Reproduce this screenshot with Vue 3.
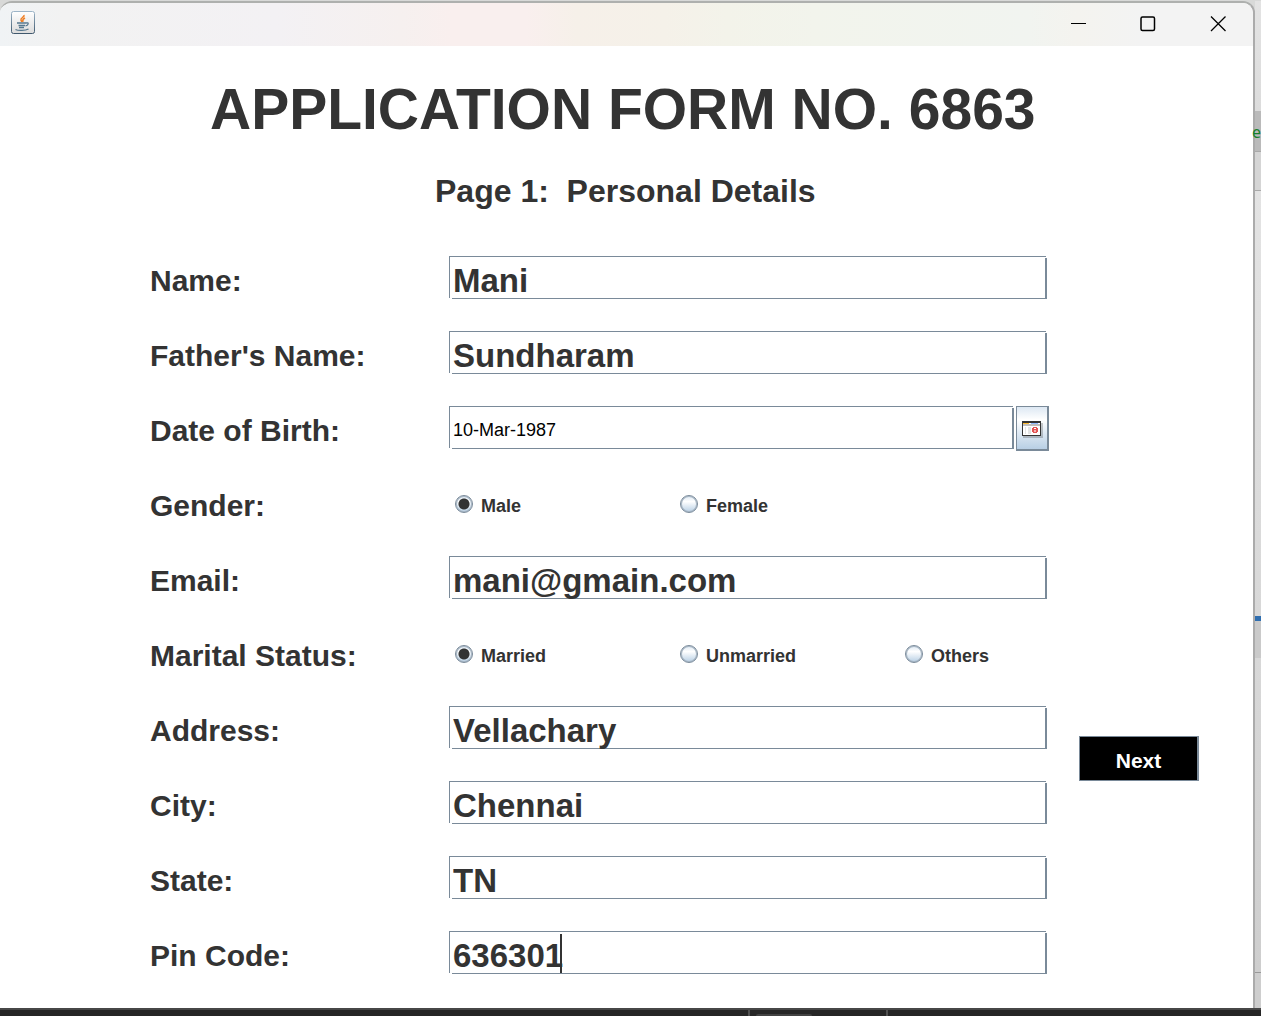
<script setup>
import { reactive } from 'vue'

const form = reactive({
  name: 'Mani',
  father: 'Sundharam',
  dob: '10-Mar-1987',
  gender: 'Male',
  email: 'mani@gmain.com',
  marital: 'Married',
  address: 'Vellachary',
  city: 'Chennai',
  state: 'TN',
  pin: '636301'
})

const rows = [
  { key: 'name', label: 'Name:', type: 'text' },
  { key: 'father', label: "Father's Name:", type: 'text' },
  { key: 'dob', label: 'Date of Birth:', type: 'date' },
  { key: 'gender', label: 'Gender:', type: 'radio', options: ['Male', 'Female'] },
  { key: 'email', label: 'Email:', type: 'text' },
  { key: 'marital', label: 'Marital Status:', type: 'radio', options: ['Married', 'Unmarried', 'Others'] },
  { key: 'address', label: 'Address:', type: 'text', next: true },
  { key: 'city', label: 'City:', type: 'text' },
  { key: 'state', label: 'State:', type: 'text' },
  { key: 'pin', label: 'Pin Code:', type: 'text', caret: true }
]
</script>

<template>
  <div class="desktop">
    <div class="workspace">
      <section class="window">
        <header class="titlebar">
          <svg class="app-icon" width="24" height="24" viewBox="0 0 24 24" aria-hidden="true">
            <defs>
              <linearGradient id="tile" x1="0" y1="0" x2="0" y2="1">
                <stop offset="0" stop-color="#ffffff" />
                <stop offset="1" stop-color="#dcdcdc" />
              </linearGradient>
              <linearGradient id="edge" x1="0" y1="0" x2="0" y2="1">
                <stop offset="0" stop-color="#9db5c8" />
                <stop offset="1" stop-color="#3f586d" />
              </linearGradient>
            </defs>
            <rect x="0.5" y="0.5" width="23" height="22" rx="2" fill="url(#tile)" stroke="url(#edge)" />
            <path d="M13 4c1 2-4 3-3 5 0 1 1 1.500 1 2M14 7c-2 1-3 2-1.500 3.500" fill="none" stroke="#ef7d22" stroke-width="1.500" />
            <path d="M6 12h9.500M15 12c3-1 3 2-.5 3M7.500 14.500h6.500M8 16.500h5M4.500 18.500c3 1.500 10 1 13-.5" fill="none" stroke="#56788f" stroke-width="1.300" />
          </svg>
          <div class="controls">
            <button type="button" aria-label="Minimize">
              <svg width="16" height="16" viewBox="0 0 16 16"><path d="M1 7.500h15" stroke="#000" /></svg>
            </button>
            <button type="button" aria-label="Maximize">
              <svg width="16" height="16" viewBox="0 0 16 16"><rect x="1" y="1" width="13.500" height="13.500" rx="1.500" fill="none" stroke="#000" stroke-width="1.500" /></svg>
            </button>
            <button type="button" aria-label="Close">
              <svg width="16" height="16" viewBox="0 0 16 16"><path d="M1 .5l14.500 14.500M15.500 .5L1 15" stroke="#000" stroke-width="1.300" /></svg>
            </button>
          </div>
        </header>

        <main>
          <h1>APPLICATION FORM NO. 6863</h1>
          <h2>Page 1:&nbsp; Personal Details</h2>

          <form @submit.prevent>
            <template v-for="row in rows" :key="row.key">
              <component :is="row.type === 'radio' ? 'span' : 'label'" :id="row.key + '-label'" class="label" :for="row.type === 'radio' ? null : row.key">{{ row.label }}</component>

              <div v-if="row.type === 'text'" class="field">
                <input :id="row.key" v-model="form[row.key]" class="box" type="text" />
                <span v-if="row.caret" class="caret"></span>
              </div>

              <div v-else-if="row.type === 'date'" class="field date">
                <input :id="row.key" v-model="form[row.key]" class="box" type="text" />
                <button class="calendar" type="button" aria-label="Choose date">
                  <svg width="21" height="17" viewBox="0 0 21 17" shape-rendering="crispEdges">
                    <path d="M1 2h20v15H1z" fill="#000" opacity=".2" />
                    <path d="M0 0h19v15H0z" fill="#333" />
                    <path d="M1 2h17v12H1z" fill="#fff" />
                    <path d="M1 2h6v1H1z" fill="#fdb82e" />
                    <path d="M9 2h7v1H9z" fill="#8fb9ff" />
                    <path d="M1 3h17v2H1z" fill="#bdbdbd" />
                    <path d="M3 6h1v7H3zM6 6h3v7H6z" fill="#e4e4e4" />
                    <path d="M11 6h4v1h-4zM10 7h2v4h-2zM14 7h2v4h-2zM11 11h4v1h-4zM12 8h2v1h-2z" fill="#e25555" />
                    <path d="M12 9h2v2h-2z" fill="#f6b0b0" />
                  </svg>
                </button>
              </div>

              <div v-else class="options" role="radiogroup" :aria-labelledby="row.key + '-label'">
                <label v-for="option in row.options" :key="option">
                  <input v-model="form[row.key]" type="radio" :name="row.key" :value="option" />
                  <span>{{ option }}</span>
                </label>
              </div>

              <div class="action">
                <button v-if="row.next" class="next" type="submit">Next</button>
              </div>
            </template>
          </form>
        </main>
      </section>

      <aside class="behind"><span class="code">e</span></aside>
    </div>
    <footer class="taskbar"><i class="tab"></i></footer>
  </div>
</template>

<style>
body {
  margin: 0;
}
</style>

<style scoped>
.desktop {
  min-height: 100vh;
  display: flex;
  flex-direction: column;
  background: #d8d9d8;
  font-family: "Liberation Sans", Arial, sans-serif;
  color: #333;
}

.workspace {
  flex: 1;
  display: grid;
  grid-template-columns: minmax(0, 1fr) 6px;
  padding-top: 1px;
}

.window {
  border-top: 2px solid #aeb0ae;
  border-right: 2px solid #ababab;
  border-top-right-radius: 12px;
  border-top-left-radius: 12px;
  background: #fff;
  overflow: hidden;
}

.titlebar {
  height: 43px;
  display: flex;
  justify-content: space-between;
  background: linear-gradient(90deg, #f0f3f5 0, #f2f2f2 5%, #f3f1f4 22%, #f6f0ef 32%, #f9efee 36%, #f9efee 42%, #f6f0e9 46%, #f5f1e9 53%, #f3f3ea 58%, #f2f4ec 65%, #f1f4f0 82%, #f4f3ef 86%, #f3f3f3 91%);
}

.app-icon {
  margin: 8px 0 0 11px;
}

.controls {
  display: flex;
}

.controls button {
  width: 70px;
  height: 43px;
  padding: 0 0 2px;
  border: 0;
  background: none;
  display: flex;
  align-items: center;
  justify-content: center;
}

main {
  padding: 31px 54px 0 150px;
}

h1 {
  margin: 0;
  padding-left: 60px;
  font-size: 57px;
  line-height: 64px;
  white-space: nowrap;
}

h2 {
  margin: 31px 0 0;
  padding-left: 285px;
  font-size: 32px;
  line-height: 38px;
  white-space: nowrap;
}

form {
  margin-top: 46px;
  display: grid;
  grid-template-columns: 299px minmax(0, 1fr) 120px;
  grid-auto-rows: 75px;
}

.label {
  font-size: 30px;
  line-height: 50px;
  font-weight: 700;
}

.field {
  position: relative;
  display: flex;
  align-items: flex-start;
  margin-right: 32px;
}

.box {
  box-sizing: border-box;
  flex: 1;
  min-width: 0;
  height: 43px;
  margin: 0;
  padding: 7px 4px 0;
  border: 0;
  border-radius: 0;
  outline: 0;
  background:
    linear-gradient(#7a8a99, #7a8a99) 0 0 / 1px 42px no-repeat,
    linear-gradient(#7a8a99, #7a8a99) 0 0 / calc(100% - 1px) 1px no-repeat,
    linear-gradient(#7a8a99, #7a8a99) 3px 100% / 100% 1px no-repeat,
    linear-gradient(#7a8a99, #7a8a99) 100% 2px / 2px 41px no-repeat,
    #fff;
  color: #333;
  font: 700 33px "Liberation Sans", Arial, sans-serif;
}

.date {
  margin-right: 30px;
  gap: 2px;
}

.date .box {
  padding-top: 5px;
  font-size: 18px;
  font-weight: 400;
  color: #000;
}

.calendar {
  width: 33px;
  height: 45px;
  padding: 3px 0 0;
  border: 1px solid #7a8a99;
  border-right-width: 2px;
  border-bottom-width: 2px;
  background: linear-gradient(#dde8f3, #fff 30%, #b8cfe5);
  display: flex;
  align-items: center;
  justify-content: center;
}

.caret {
  position: absolute;
  left: 111px;
  top: 3px;
  width: 2px;
  height: 39px;
  background: #333;
}

.options {
  display: grid;
  grid-template-columns: 225px 225px 1fr;
  padding-left: 6px;
}

.options label {
  height: 43px;
  display: flex;
  align-items: center;
  gap: 8px;
  font-size: 18px;
  font-weight: 700;
}

.options span {
  padding-top: 6px;
}

.options input {
  appearance: none;
  box-sizing: border-box;
  width: 18px;
  height: 18px;
  margin: 0;
  border: 1px solid #7a8a99;
  border-radius: 50%;
  background: linear-gradient(#dde8f3, #fff 35%, #b8cfe5);
  box-shadow: inset 0 0 0 1px #a9b8c6;
}

.options label {
  padding-top: 1px;
}

.options input:checked {
  background:
    radial-gradient(circle, #333 5px, transparent 6px),
    linear-gradient(#dde8f3, #fff 35%, #b8cfe5);
}

.action {
  display: flex;
  align-items: flex-end;
}

.next {
  width: 120px;
  height: 45px;
  padding: 4px 0 0;
  border: 1px solid #7a8a99;
  border-right-width: 2px;
  box-shadow: inset 0 -1px #000;
  background: #000;
  color: #fff;
  font: 700 21px "Liberation Sans", Arial, sans-serif;
}

.behind {
  background: linear-gradient(#e3e3e3 0, #dcdcdc 110px, #bababa 110px, #bababa 150px, #a9a9a9 150px, #a9a9a9 151px, #d5d5d5 151px, #d5d5d5 189px, #a9a9a9 189px, #a9a9a9 190px, #e3e3e3 190px, #d8d8d8 615px, #2f6eaf 615px, #2f6eaf 620px, #cacaca 620px, #cacaca 657px, #d8d8d8 657px, #cecece 971px, #999 971px, #999 972px, #cecece 972px);
}

.code {
  display: block;
  padding-top: 119px;
  margin-left: -3px;
  font: 16px/24px "Noto Sans", sans-serif;
  color: #16802a;
}

.taskbar {
  box-sizing: border-box;
  height: 8px;
  border-top: 2px solid #474747;
  background:
    linear-gradient(#505050, #505050) 748px 0 / 2px 6px no-repeat,
    linear-gradient(#505050, #505050) 886px 0 / 2px 6px no-repeat,
    #262626;
}

.tab {
  display: block;
  width: 56px;
  height: 2px;
  margin: 4px 0 0 756px;
  border-radius: 6px 6px 0 0;
  background: #424242;
}
</style>
